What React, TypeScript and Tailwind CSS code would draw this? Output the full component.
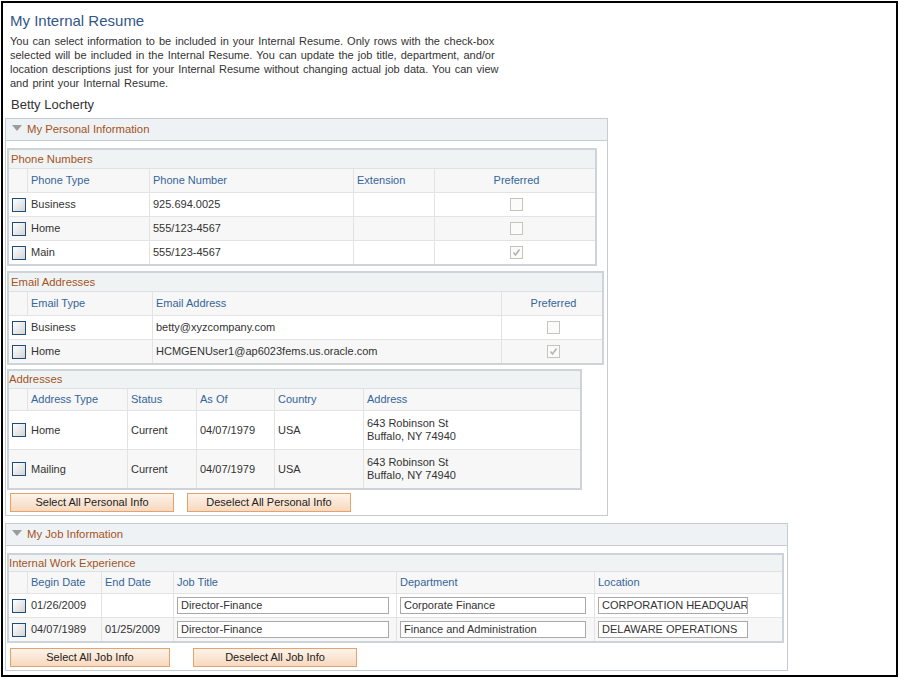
import React from 'react';

type Col = { label: string; w: string; center?: boolean };

const Check = () => (
  <span className="inline-block w-[14px] h-[14px] shrink-0 border border-[#1e4d7b] bg-linear-to-br from-white to-[#d4d4d4]" />
);

const Pref = ({ on }: { on?: boolean }) => (
  <span className="inline-flex w-[13px] h-[13px] items-center justify-center border border-[#c6c5bb] bg-[#fbfbfb]">
    {on && (
      <svg width="9" height="9" viewBox="0 0 9 9">
        <path d="M1.5 4.5 L3.5 7 L7.5 1.5" fill="none" stroke="#b4b4b4" strokeWidth="1.6" />
      </svg>
    )}
  </span>
);

const Field = ({ w, text }: { w: string; text: string }) => (
  <div className={`${w} h-[17px] flex items-center overflow-hidden whitespace-nowrap border border-[#a9a9a9] bg-white pl-[3px] text-[11px] text-[#333]`}>
    {text}
  </div>
);

function Grid({
  title,
  width,
  titleH,
  titlePad,
  headH,
  rowH,
  cols,
  rows,
}: {
  title: string;
  width: string;
  titleH: string;
  titlePad: string;
  headH: string;
  rowH: string;
  cols: Col[];
  rows: React.ReactNode[][];
}) {
  return (
    <div className={`${width} border-2 border-[#cdd3d8]`}>
      <div className={`${titleH} ${titlePad} flex items-center bg-[#f0f3f4] border-b border-[#dde1e4] text-[11.3px] text-[#a5531d]`}>
        {title}
      </div>
      <div className={`${headH} flex bg-[#f7f7f7]`}>
        {cols.map((c, i) => (
          <div
            key={i}
            className={`${c.w} shrink-0 flex items-center text-[11px] text-[#35659a] ${i > 0 ? 'border-l border-[#e3e3e3] pl-[3px]' : ''} ${c.center ? 'justify-center' : ''}`}
          >
            {c.label}
          </div>
        ))}
      </div>
      {rows.map((r, ri) => (
        <div key={ri} className={`${rowH} flex border-t border-[#e3e3e3] ${ri % 2 ? 'bg-[#f7f7f7]' : 'bg-white'}`}>
          {cols.map((c, i) => (
            <div
              key={i}
              className={`${c.w} shrink-0 flex items-center text-[11px] text-[#333] ${i > 1 ? 'border-l border-[#e3e3e3] pl-[3px]' : ''} ${i === 0 ? 'pl-[3px]' : ''} ${i === 1 ? 'pl-[4px]' : ''} ${c.center ? 'justify-center' : ''}`}
            >
              {i === 0 ? <Check /> : r[i - 1]}
            </div>
          ))}
        </div>
      ))}
    </div>
  );
}

const Section = ({ title, width, children }: { title: string; width: string; children: React.ReactNode }) => (
  <div className={`${width} border border-[#c6cdd2]`}>
    <div className="h-[22px] flex items-center bg-[#eff2f4] border-b border-[#c6cdd2]">
      <svg width="10" height="7" viewBox="0 0 10 7" className="ml-[6px] -mt-[3px]">
        <polygon points="0,0 10,0 5,6" fill="#9c9c9c" />
      </svg>
      <span className="ml-[5px] text-[11.3px] text-[#a5531d]">{title}</span>
    </div>
    {children}
  </div>
);

const Btn = ({ w, label }: { w: string; label: string }) => (
  <button className={`${w} h-[19px] border border-[#e2a46c] bg-linear-to-b from-[#fdf3ea] to-[#f7d8be] text-[11px] text-[#222] leading-none`}>
    {label}
  </button>
);

const addr = (
  <div className="leading-[13px]">
    <div>643 Robinson St</div>
    <div>Buffalo, NY 74940</div>
  </div>
);

export default function App() {
  return (
    <div className="m-[1px] w-[897px] h-[676px] border-2 border-black bg-white overflow-hidden font-['Liberation_Sans',Arial,sans-serif] pt-[7px] pl-[2px]">
      <div className="ml-[5px] h-[20px] text-[15px] leading-[21px] text-[#34568a]">My Internal Resume</div>
      <div className="ml-[5px] mt-[4px] text-[11px] leading-[14px] text-[#333] [word-spacing:1px]">
        <div>You can select information to be included in your Internal Resume. Only rows with the check-box</div>
        <div>selected will be included in the Internal Resume. You can update the job title, department, and/or</div>
        <div>location descriptions just for your Internal Resume without changing actual job data. You can view</div>
        <div>and print your Internal Resume.</div>
      </div>
      <div className="ml-[6px] mt-[7px] h-[16px] text-[13px] leading-[16px] text-[#333]">Betty Locherty</div>

      <div className="mt-[5px]">
        <Section title="My Personal Information" width="w-[603px]">
          <div className="pl-[1px] pt-[7px] pb-[3px]">
            <Grid
              title="Phone Numbers"
              width="w-[590px]"
              titleH="h-[19px]"
              titlePad="pl-[2px]"
              headH="h-[23px]"
              rowH="h-[24px]"
              cols={[
                { label: '', w: 'w-[18px]' },
                { label: 'Phone Type', w: 'w-[122px]' },
                { label: 'Phone Number', w: 'w-[204px]' },
                { label: 'Extension', w: 'w-[81px]' },
                { label: 'Preferred', w: 'w-[161px]', center: true },
              ]}
              rows={[
                ['Business', '925.694.0025', '', <Pref />],
                ['Home', '555/123-4567', '', <Pref />],
                ['Main', '555/123-4567', '', <Pref on />],
              ]}
            />
            <div className="mt-[5px]">
              <Grid
                title="Email Addresses"
                width="w-[597px]"
                titleH="h-[19px]"
                titlePad="pl-[2px]"
                headH="h-[23px]"
                rowH="h-[24px]"
                cols={[
                  { label: '', w: 'w-[18px]' },
                  { label: 'Email Type', w: 'w-[125px]' },
                  { label: 'Email Address', w: 'w-[349px]' },
                  { label: 'Preferred', w: 'w-[101px]', center: true },
                ]}
                rows={[
                  ['Business', 'betty@xyzcompany.com', <Pref />],
                  ['Home', 'HCMGENUser1@ap6023fems.us.oracle.com', <Pref on />],
                ]}
              />
            </div>
            <div className="mt-[4px]">
              <Grid
                title="Addresses"
                width="w-[575px]"
                titleH="h-[18px]"
                titlePad="pl-0"
                headH="h-[21px]"
                rowH="h-[39px]"
                cols={[
                  { label: '', w: 'w-[18px]' },
                  { label: 'Address Type', w: 'w-[100px]' },
                  { label: 'Status', w: 'w-[69px]' },
                  { label: 'As Of', w: 'w-[78px]' },
                  { label: 'Country', w: 'w-[89px]' },
                  { label: 'Address', w: 'w-[217px]' },
                ]}
                rows={[
                  ['Home', 'Current', '04/07/1979', 'USA', addr],
                  ['Mailing', 'Current', '04/07/1979', 'USA', addr],
                ]}
              />
            </div>
            <div className="mt-[3px] ml-[3px] flex gap-[13px]">
              <Btn w="w-[164px]" label="Select All Personal Info" />
              <Btn w="w-[164px]" label="Deselect All Personal Info" />
            </div>
          </div>
        </Section>
      </div>

      <div className="mt-[7px]">
        <Section title="My Job Information" width="w-[783px]">
          <div className="pl-[1px] pt-[7px] pb-[3px]">
            <Grid
              title="Internal Work Experience"
              width="w-[777px]"
              titleH="h-[17px]"
              titlePad="pl-0"
              headH="h-[21px]"
              rowH="h-[24px]"
              cols={[
                { label: '', w: 'w-[18px]' },
                { label: 'Begin Date', w: 'w-[74px]' },
                { label: 'End Date', w: 'w-[72px]' },
                { label: 'Job Title', w: 'w-[223px]' },
                { label: 'Department', w: 'w-[198px]' },
                { label: 'Location', w: 'w-[188px]' },
              ]}
              rows={[
                [
                  '01/26/2009',
                  '',
                  <Field w="w-[212px]" text="Director-Finance" />,
                  <Field w="w-[186px]" text="Corporate Finance" />,
                  <Field w="w-[150px]" text="CORPORATION HEADQUAR" />,
                ],
                [
                  '04/07/1989',
                  '01/25/2009',
                  <Field w="w-[212px]" text="Director-Finance" />,
                  <Field w="w-[186px]" text="Finance and Administration" />,
                  <Field w="w-[150px]" text="DELAWARE OPERATIONS" />,
                ],
              ]}
            />
            <div className="mt-[5px] ml-[3px] flex gap-[23px]">
              <Btn w="w-[160px]" label="Select All Job Info" />
              <Btn w="w-[164px]" label="Deselect All Job Info" />
            </div>
          </div>
        </Section>
      </div>
    </div>
  );
}
